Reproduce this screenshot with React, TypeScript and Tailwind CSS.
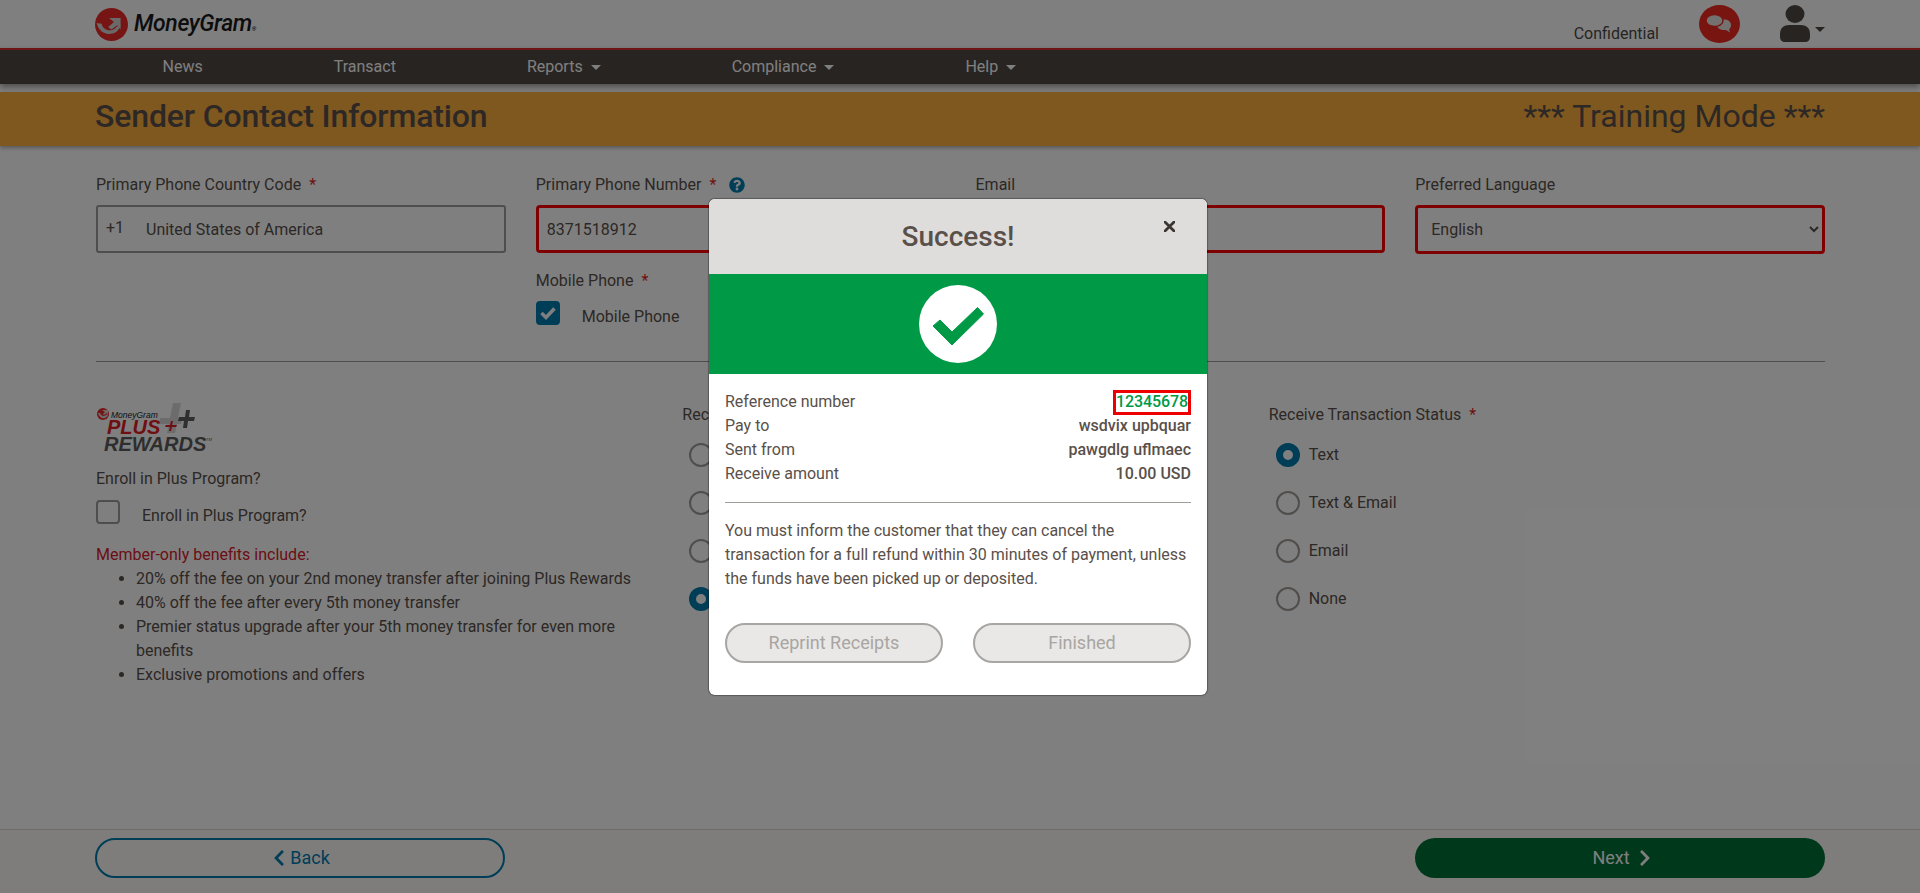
import { FaChevronLeft, FaChevronRight, FaQuestionCircle } from "react-icons/fa";

const font = { fontFamily: "Roboto, sans-serif" };

function Caret({ className }: { className: string }) {
  return <span className={`inline-block border-x-[5px] border-t-[5px] border-x-transparent ${className}`} />;
}

function Required() {
  return <span className="ml-2 text-[#e01f26]">*</span>;
}

function MoneyGramMark({ size }: { size: number }) {
  return (
    <svg width={size} height={size} viewBox="0 0 40 40">
      <circle cx="20" cy="20" r="20" fill="#ee2a2a" />
      <path d="M2 18c2 10 10 15 19 13 5-1 9-5 10-11l-5 3c-2 3-5 4-8 4-5 0-9-3-10-8-2 0-4 0-6-1z" fill="#d5d5d5" />
      <path d="M17 12h14v14l-4-5-7 5c-2-1-3-2-4-3l7-6z" fill="#d5d5d5" />
    </svg>
  );
}

function PlusRewardsLogo() {
  return (
    <svg width="120" height="52" viewBox="0 0 120 52" fontFamily="'Liberation Sans', sans-serif" fontStyle="italic">
      <path d="M64 15h10l3-15h8l-3 15h4l-1 6h-4l-2 9h-8l2-9H63z" fill="#d8d8d8" />
      <circle cx="7" cy="11" r="6" fill="#ee2a2a" />
      <path d="M2 10c1 4 4 6 7 5 2-1 3-2 3-4l-2 1c-2 2-5 1-6-2zM6 7h6v5l-1-2-3 2-1-1 2-2z" fill="#d5d5d5" />
      <text x="15" y="15" fontSize="8.500" fill="#1a1a1a">MoneyGram</text>
      <text x="11" y="31" fontSize="20" fontWeight="700" fill="#e01f26">PLUS</text>
      <text x="8" y="48" fontSize="20" fontWeight="700" fill="#5c5c5c">REWARDS</text>
      <text x="110" y="38" fontSize="4" fill="#5c5c5c">TM</text>
      <path d="M70 22h4l1-4h2l-1 4h5l-1 2h-4l-1 4h-2l1-4h-5z" fill="#e01f26" />
      <path d="M83 14h6l1-7h4l-1 7h6l-1 4h-6l-1 7h-4l1-7h-6z" fill="#606060" />
    </svg>
  );
}

function NavItem({ label, menu }: { label: string; menu?: boolean }) {
  return (
    <a className="flex items-center gap-2 px-[65.5px] text-white">
      {label}
      {menu && <Caret className="border-t-white" />}
    </a>
  );
}

function Field({ label, required, children }: { label: string; required?: boolean; children: React.ReactNode }) {
  return (
    <div>
      <label className="block h-8 leading-6">
        {label}
        {required && <Required />}
      </label>
      {children}
    </div>
  );
}

function Radio({ label, checked }: { label: string; checked?: boolean }) {
  return (
    <label className="flex h-6 items-center gap-[9px] pl-[7px]">
      {checked ? (
        <span className="size-6 rounded-full border-[7px] border-[#007cb0] bg-white" />
      ) : (
        <span className="size-6 rounded-full border-2 border-[#a09c98] bg-white" />
      )}
      {label}
    </label>
  );
}

function RadioGroup({ label, options, checked }: { label: string; options: string[]; checked: string }) {
  return (
    <div>
      <div className="h-6 leading-6">
        {label}
        <Required />
      </div>
      <div className="mt-4 flex flex-col gap-6">
        {options.map((o) => (
          <Radio key={o} label={o} checked={o === checked} />
        ))}
      </div>
    </div>
  );
}

function SummaryRow({ label, value }: { label: string; value: string }) {
  return (
    <div className="flex justify-between leading-6">
      <span>{label}</span>
      <span className="font-medium">{value}</span>
    </div>
  );
}

export default function App() {
  const radioOptions = ["Text", "Text & Email", "Email", "None"];

  return (
    <div className="relative flex h-[893px] flex-col overflow-hidden bg-white text-base text-[#5a504a]" style={font}>
      {/* Top bar */}
      <header className="flex h-12 items-center justify-between px-[95px]">
        <div className="flex items-center gap-[6px]">
          <MoneyGramMark size={33} />
          <span className="text-[23px] font-medium italic tracking-[-0.4px] text-[#1a1a1a]">
            MoneyGram<span className="text-[6px]">®</span>
          </span>
        </div>
        <div className="flex items-center">
          <span className="mt-5 text-[#4e4a47]">Confidential</span>
          <svg className="ml-[40px]" width="41" height="38" viewBox="0 0 41 38">
            <ellipse cx="20.500" cy="19" rx="20.500" ry="19" fill="#f02a20" />
            <path d="M31 27.500l-4-2.500c-5 .5-9-1.500-9-5 0-3.500 3-5.500 7-5.500s7 2 7 5.500c0 2-1 3.500-2 4.500z" fill="#e8e4e0" />
            <path d="M9 24l3-3c-3-1-5-3-5-5.500C7 12 11 9.500 15.500 9.500S24 12 24 15.500 20 21.500 15.500 21.500c-1 0-2 0-3-.5z" fill="#e8e4e0" stroke="#f02a20" strokeWidth="1.500" />
          </svg>
          <svg className="ml-[39px]" width="32" height="38" viewBox="0 0 32 38" fill="#504844">
            <ellipse cx="16" cy="9" rx="9.500" ry="9" />
            <path d="M1 29c0-6 4-9 9-9h12c5 0 9 3 9 9v3c0 3-2 5-5 5H6c-3 0-5-2-5-5z" />
          </svg>
          <Caret className="ml-[4px] mt-[10px] border-t-[#504844]" />
        </div>
      </header>

      {/* Nav */}
      <nav className="flex h-9 items-center border-t-2 border-[#dc2a2a] bg-[#504844] pl-[97px] shadow-[0_3px_6px_rgba(0,0,0,0.4)]">
        <NavItem label="News" />
        <NavItem label="Transact" />
        <NavItem label="Reports" menu />
        <NavItem label="Compliance" menu />
        <NavItem label="Help" menu />
      </nav>

      {/* Page title */}
      <div className="mt-2 flex h-[54px] items-center justify-between bg-[#feb040] px-[95px] pb-[7px] text-[32px] text-[#5a504a] shadow-[0_2px_4px_rgba(0,0,0,0.3)]">
        <h1 className="font-medium tracking-[-0.15px]">Sender Contact Information</h1>
        <span>*** Training Mode ***</span>
      </div>

      <main className="flex-1 pl-24 pr-[95px] pt-[27px]">
        <div className="grid grid-cols-4 gap-x-[30px]">
          <Field label="Primary Phone Country Code" required>
            <div className="flex h-12 items-center rounded-[3px] border-2 border-[#a09c98] pl-2">
              <span className="w-10 -translate-y-px">+1</span>
              <span className="translate-y-px">United States of America</span>
            </div>
          </Field>
          <div>
            <Field label="Primary Phone Number" required>
              <div className="absolute left-[729px] top-[177px]">
                <FaQuestionCircle className="text-base text-[#007cb0]" />
              </div>
              <input readOnly defaultValue="8371518912" className="h-12 w-full rounded-[4px] border-[3px] border-[#ff0000] px-2 outline-none" />
            </Field>
            <div className="mt-4 leading-6">
              Mobile Phone
              <Required />
            </div>
            <label className="mt-2 flex items-center gap-[22px]">
              <span className="flex size-6 items-center justify-center rounded-[4px] bg-[#007cb0]">
                <svg width="16" height="14" viewBox="0 0 16 14" fill="none" stroke="#fff" strokeWidth="3.500">
                  <path d="M1.500 7l4.500 4.500 8.500-9" />
                </svg>
              </span>
              <span className="translate-y-[4px]">Mobile Phone</span>
            </label>
          </div>
          <Field label="Email">
            <input readOnly className="h-12 w-full rounded-[4px] border-[3px] border-[#ff0000] px-2 outline-none" />
          </Field>
          <Field label="Preferred Language">
            <select className="h-[49px] w-full rounded-[4px] border-[3px] border-[#ff0000] pl-[9px] outline-none">
              <option>English</option>
            </select>
          </Field>
        </div>

        <hr className="mt-9 border-[#a09c98]" />

        <div className="mt-[41px] grid grid-cols-3 gap-x-[30px]">
          {/* Plus Rewards */}
          <div>
            <PlusRewardsLogo />
            <div className="mt-3 leading-6">Enroll in Plus Program?</div>
            <label className="mt-[9px] flex items-center gap-[22px]">
              <span className="size-6 rounded-[4px] border-2 border-[#a09c98]" />
              <span className="translate-y-[4px]">Enroll in Plus Program?</span>
            </label>
            <p className="mt-[19px] leading-6 text-[#d9202c]">Member-only benefits include:</p>
            <ul className="list-disc pl-10 leading-6">
              <li>20% off the fee on your 2nd money transfer after joining Plus Rewards</li>
              <li>40% off the fee after every 5th money transfer</li>
              <li>Premier status upgrade after your 5th money transfer for even more benefits</li>
              <li>Exclusive promotions and offers</li>
            </ul>
          </div>
          <RadioGroup label="Receive Transaction Receipt" options={radioOptions} checked="None" />
          <RadioGroup label="Receive Transaction Status" options={radioOptions} checked="Text" />
        </div>
      </main>

      {/* Footer */}
      <footer className="flex h-16 items-start justify-between border-t border-[#dddad4] bg-[#fdfbf6] px-[95px] pt-2 text-lg">
        <button className="flex h-10 w-[410px] items-center justify-center gap-[2px] rounded-full border-2 border-[#007cb0] text-[#007cb0]">
          <FaChevronLeft className="text-lg" />
          Back
        </button>
        <button className="flex h-10 w-[410px] items-center justify-center gap-[6px] rounded-full bg-[#017038] pl-[6px] text-white">
          Next
          <FaChevronRight className="text-lg" />
        </button>
      </footer>

      {/* Success dialog */}
      <div className="absolute inset-0 bg-black/50">
        <div className="absolute left-[709px] top-[199px] w-[498px] overflow-hidden rounded-md bg-white shadow-[0_0_1px_1px_rgba(0,0,0,0.3)]">
          <div className="relative flex h-[75px] items-center justify-center bg-[#dfdddb]">
            <h2 className="text-[28px] font-medium text-[#5a504a]">Success!</h2>
            <svg className="absolute right-[32px] top-[22px]" width="11" height="11" viewBox="0 0 11 11" stroke="#3c3633" strokeWidth="2.800" strokeLinecap="round">
              <path d="M1 1l9 9M10 1l-9 9" />
            </svg>
          </div>
          <div className="flex h-[100px] items-center justify-center bg-[#009a47]">
            <span className="flex size-[78px] items-center justify-center rounded-full bg-white">
              <svg width="78" height="78" viewBox="0 0 78 78">
                <path d="M14 41l7-6 12 12 25.500-24.500 6 6.500-31.500 31z" fill="#009a47" stroke="#009a47" strokeLinejoin="round" />
              </svg>
            </span>
          </div>
          <div className="px-4 pt-4 pb-8">
            <div className="flex h-6 items-center justify-between">
              <span>Reference number</span>
              <span className="flex h-[25px] items-center border-[3px] border-[#ee0000] font-medium tracking-[-0.1px] text-[#009a47]">12345678</span>
            </div>
            <SummaryRow label="Pay to" value="wsdvix upbquar" />
            <SummaryRow label="Sent from" value="pawgdlg uflmaec" />
            <SummaryRow label="Receive amount" value="10.00 USD" />
            <hr className="mt-4 border-[#a09c98]" />
            <p className="mt-4 leading-6">
              You must inform the customer that they can cancel the transaction for a full refund within 30 minutes of payment, unless the funds have been picked up or deposited.
            </p>
            <div className="mt-8 flex gap-[30px]">
              <button className="h-10 flex-1 rounded-full border-2 border-[#a8a5a2] bg-[#e9e8e6] text-lg text-[#a8a5a2]">Reprint Receipts</button>
              <button className="h-10 flex-1 rounded-full border-2 border-[#a8a5a2] bg-[#e9e8e6] text-lg text-[#a8a5a2]">Finished</button>
            </div>
          </div>
        </div>
      </div>
    </div>
  );
}
